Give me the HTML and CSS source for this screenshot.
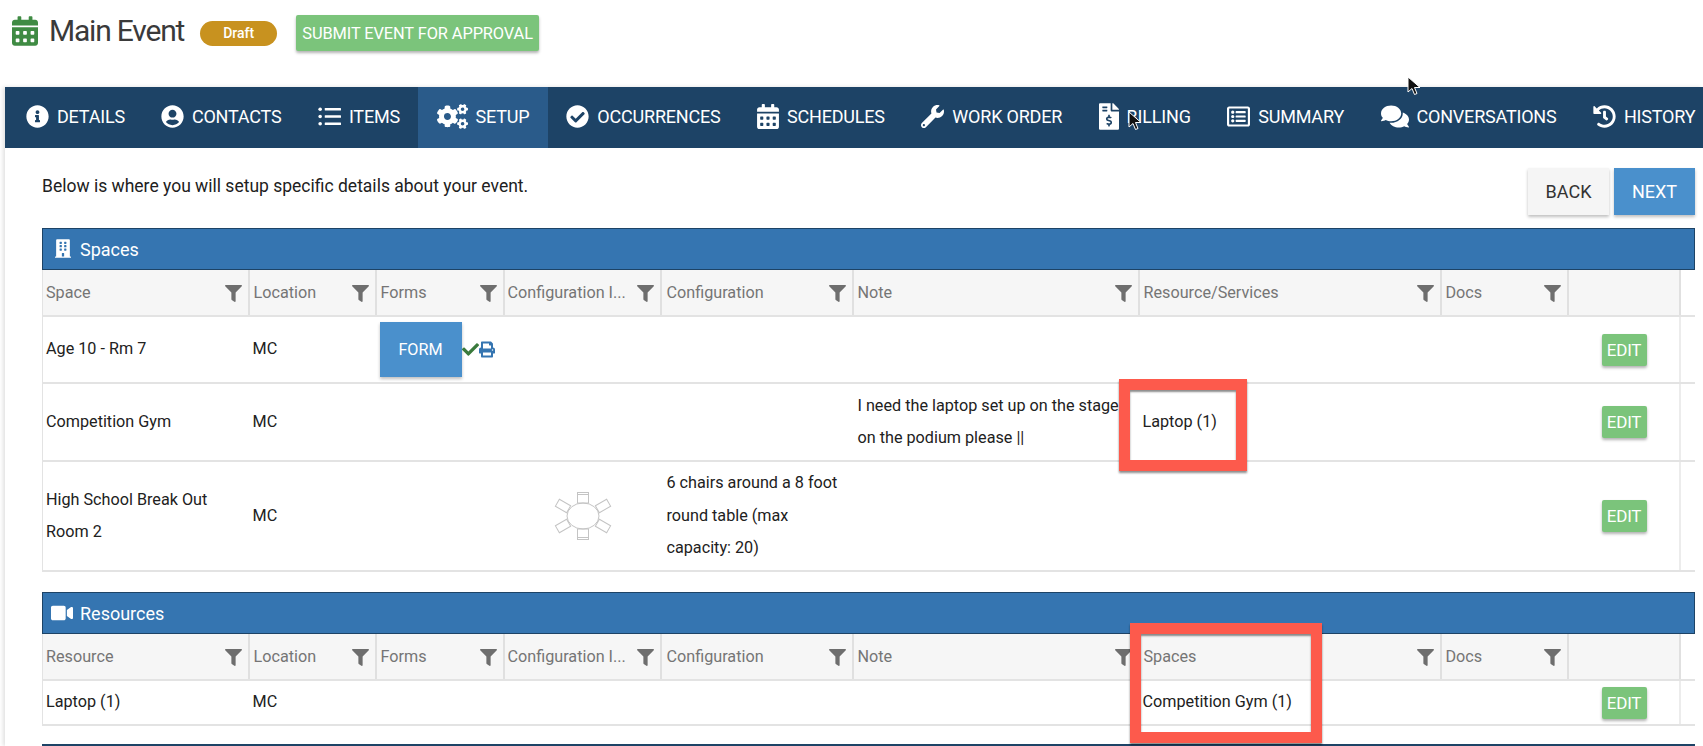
FILE: index.html
```html
<!DOCTYPE html>
<html lang="en">
<head>
<meta charset="utf-8">
<title>Main Event</title>
<link rel="stylesheet" href="styles.css">
</head>
<body>
<svg class="sprite" aria-hidden="true">
<symbol id="i-cal" viewBox="0 0 448 512"><path d="M0 464c0 26.500 21.500 48 48 48h352c26.500 0 48-21.500 48-48V192H0v272zm320-196c0-6.600 5.400-12 12-12h40c6.600 0 12 5.400 12 12v40c0 6.600-5.400 12-12 12h-40c-6.600 0-12-5.400-12-12v-40zm0 128c0-6.600 5.400-12 12-12h40c6.600 0 12 5.400 12 12v40c0 6.600-5.400 12-12 12h-40c-6.600 0-12-5.400-12-12v-40zM192 268c0-6.600 5.400-12 12-12h40c6.600 0 12 5.400 12 12v40c0 6.600-5.400 12-12 12h-40c-6.600 0-12-5.400-12-12v-40zm0 128c0-6.600 5.400-12 12-12h40c6.600 0 12 5.400 12 12v40c0 6.600-5.400 12-12 12h-40c-6.600 0-12-5.400-12-12v-40zM64 268c0-6.600 5.400-12 12-12h40c6.600 0 12 5.400 12 12v40c0 6.600-5.400 12-12 12H76c-6.600 0-12-5.400-12-12v-40zm0 128c0-6.600 5.400-12 12-12h40c6.600 0 12 5.400 12 12v40c0 6.600-5.400 12-12 12H76c-6.600 0-12-5.400-12-12v-40zM400 64h-48V16c0-8.800-7.200-16-16-16h-32c-8.800 0-16 7.200-16 16v48H160V16c0-8.800-7.200-16-16-16h-32c-8.800 0-16 7.200-16 16v48H48C21.500 64 0 85.500 0 112v48h448v-48c0-26.500-21.500-48-48-48z"/></symbol>
<symbol id="i-info" viewBox="0 0 512 512"><path d="M256 8C119.043 8 8 119.083 8 256c0 136.997 111.043 248 248 248s248-111.003 248-248C504 119.083 392.957 8 256 8zm0 110c23.196 0 42 18.804 42 42s-18.804 42-42 42-42-18.804-42-42 18.804-42 42-42zm56 254c0 6.627-5.373 12-12 12h-88c-6.627 0-12-5.373-12-12v-24c0-6.627 5.373-12 12-12h12v-64h-12c-6.627 0-12-5.373-12-12v-24c0-6.627 5.373-12 12-12h64c6.627 0 12 5.373 12 12v100h12c6.627 0 12 5.373 12 12v24z"/></symbol>
<symbol id="i-user" viewBox="0 0 496 512"><path d="M248 8C111 8 0 119 0 256s111 248 248 248 248-111 248-248S385 8 248 8zm0 96c48.600 0 88 39.400 88 88s-39.400 88-88 88-88-39.400-88-88 39.400-88 88-88zm0 344c-58.700 0-111.300-26.600-146.500-68.200 18.800-35.400 55.600-59.800 98.500-59.800 2.400 0 4.800.4 7.100 1.100 13 4.200 26.600 6.900 40.900 6.900 14.300 0 28-2.700 40.900-6.900 2.300-.7 4.700-1.100 7.100-1.100 42.900 0 79.700 24.400 98.500 59.800C359.300 421.400 306.700 448 248 448z"/></symbol>
<symbol id="i-list" viewBox="0 0 512 512"><circle cx="48" cy="96" r="40"/><circle cx="48" cy="256" r="40"/><circle cx="48" cy="416" r="40"/><rect x="150" y="68" width="362" height="56" rx="12"/><rect x="150" y="228" width="362" height="56" rx="12"/><rect x="150" y="388" width="362" height="56" rx="12"/></symbol>
<symbol id="i-cogs" viewBox="0 0 640 512"><path d="M512.100 191l-8.200 14.300c-3 5.300-9.400 7.500-15.100 5.400-11.800-4.400-22.600-10.700-32.100-18.600-4.600-3.800-5.800-10.500-2.800-15.700l8.200-14.300c-6.900-8-12.300-17.300-15.900-27.400h-16.500c-6 0-11.200-4.300-12.200-10.300-2-12-2.100-24.600 0-37.100 1-6 6.200-10.400 12.200-10.400h16.500c3.600-10.100 9-19.400 15.900-27.400l-8.200-14.300c-3-5.200-1.900-11.900 2.800-15.700 9.500-7.900 20.400-14.200 32.100-18.600 5.700-2.100 12.100.1 15.100 5.400l8.200 14.300c10.500-1.900 21.200-1.900 31.700 0L552 6.300c3-5.300 9.400-7.500 15.100-5.400 11.800 4.400 22.600 10.700 32.100 18.600 4.600 3.800 5.800 10.500 2.800 15.700l-8.200 14.300c6.900 8 12.300 17.300 15.900 27.400h16.500c6 0 11.200 4.300 12.200 10.300 2 12 2.100 24.600 0 37.100-1 6-6.200 10.400-12.200 10.400h-16.500c-3.600 10.100-9 19.400-15.900 27.400l8.200 14.300c3 5.200 1.900 11.900-2.800 15.700-9.500 7.900-20.400 14.200-32.100 18.600-5.700 2.100-12.100-.1-15.100-5.400l-8.200-14.300c-10.400 1.900-21.200 1.900-31.700 0zm-10.500-58.800c38.500 29.600 82.400-14.300 52.800-52.800-38.500-29.700-82.400 14.300-52.800 52.800zM386.300 286.100l33.700 16.800c10.100 5.800 14.500 18.100 10.500 29.100-8.900 24.200-26.400 46.400-42.600 65.800-7.400 8.900-20.200 11.100-30.300 5.300l-29.100-16.800c-16 13.700-34.600 24.600-54.900 31.700v33.600c0 11.600-8.300 21.600-19.700 23.600-24.600 4.200-50.400 4.400-75.900 0-11.500-2-20-11.900-20-23.600V418c-20.300-7.200-38.900-18-54.900-31.700L74 403c-10 5.800-22.900 3.600-30.300-5.300-16.200-19.400-33.300-41.600-42.200-65.700-4-10.900.4-23.200 10.500-29.100l33.300-16.800c-3.900-20.900-3.900-42.400 0-63.400L12 205.800c-10.100-5.800-14.600-18.100-10.500-29 8.900-24.200 26-46.400 42.200-65.800 7.400-8.900 20.200-11.100 30.300-5.300l29.100 16.800c16-13.700 34.600-24.600 54.900-31.700V57.100c0-11.500 8.200-21.500 19.600-23.500 24.600-4.200 50.500-4.400 76-.1 11.500 2 20 11.900 20 23.600v33.600c20.300 7.200 38.900 18 54.900 31.700l29.100-16.800c10-5.800 22.900-3.600 30.300 5.300 16.200 19.400 33.200 41.600 42.100 65.800 4 10.900.1 23.200-10 29.100l-33.700 16.800c3.900 21 3.900 42.500 0 63.500zm-117.600 21.100c59.200-77-28.700-164.900-105.700-105.700-59.200 77 28.700 164.900 105.700 105.700zm243.400 182.700l-8.200 14.300c-3 5.300-9.400 7.500-15.100 5.400-11.800-4.400-22.600-10.700-32.100-18.600-4.600-3.800-5.800-10.500-2.800-15.700l8.200-14.300c-6.900-8-12.300-17.300-15.900-27.400h-16.500c-6 0-11.200-4.300-12.200-10.300-2-12-2.100-24.600 0-37.100 1-6 6.200-10.400 12.200-10.400h16.500c3.600-10.100 9-19.400 15.900-27.400l-8.200-14.300c-3-5.200-1.900-11.900 2.800-15.700 9.500-7.900 20.400-14.200 32.100-18.600 5.700-2.100 12.100.1 15.100 5.400l8.200 14.300c10.500-1.900 21.200-1.900 31.700 0l8.200-14.300c3-5.300 9.400-7.500 15.100-5.400 11.800 4.400 22.600 10.700 32.100 18.600 4.600 3.800 5.800 10.500 2.800 15.700l-8.200 14.300c6.900 8 12.300 17.300 15.900 27.400h16.500c6 0 11.200 4.300 12.200 10.300 2 12 2.100 24.600 0 37.100-1 6-6.200 10.400-12.200 10.400h-16.500c-3.600 10.100-9 19.400-15.900 27.400l8.200 14.300c3 5.200 1.900 11.900-2.800 15.700-9.500 7.900-20.400 14.200-32.100 18.600-5.700 2.100-12.100-.1-15.100-5.400l-8.200-14.300c-10.400 1.900-21.200 1.900-31.700 0zM501.600 431c38.500 29.600 82.400-14.300 52.800-52.800-38.500-29.600-82.400 14.300-52.800 52.800z"/></symbol>
<symbol id="i-checkc" viewBox="0 0 512 512"><path d="M504 256c0 136.967-111.033 248-248 248S8 392.967 8 256 119.033 8 256 8s248 111.033 248 248zM227.314 387.314l184-184c6.248-6.248 6.248-16.379 0-22.627l-22.627-22.627c-6.248-6.249-16.379-6.249-22.628 0L216 308.118l-70.059-70.059c-6.248-6.248-16.379-6.248-22.628 0l-22.627 22.627c-6.248 6.248-6.248 16.379 0 22.627l104 104c6.249 6.249 16.379 6.249 22.628.001z"/></symbol>
<symbol id="i-wrench" viewBox="0 0 512 512"><path d="M507.730 109.100c-2.240-9.030-13.540-12.090-20.120-5.510l-74.360 74.360-67.880-11.310-11.310-67.880 74.360-74.360c6.620-6.620 3.430-17.900-5.660-20.160-47.380-11.740-99.550.91-136.580 37.930-39.640 39.640-50.550 97.100-34.050 147.200L18.740 402.760c-24.990 24.990-24.990 65.510 0 90.500 24.990 24.990 65.510 24.990 90.500 0l213.210-213.210c50.120 16.710 107.470 5.680 147.370-34.220 37.070-37.070 49.700-89.320 37.910-136.730zM64 472c-13.250 0-24-10.750-24-24 0-13.260 10.750-24 24-24s24 10.740 24 24c0 13.250-10.750 24-24 24z"/></symbol>
<symbol id="i-bill" viewBox="0 0 384 512"><path d="M377 105L279.100 7c-4.500-4.500-10.600-7-17-7H256v128h128v-6.100c0-6.300-2.500-12.400-7-16.900zm-153 31V0H24C10.700 0 0 10.700 0 24v464c0 13.300 10.700 24 24 24h336c13.300 0 24-10.700 24-24V160H248c-13.200 0-24-10.800-24-24zM64 72c0-4.420 3.580-8 8-8h80c4.420 0 8 3.580 8 8v16c0 4.420-3.580 8-8 8H72c-4.420 0-8-3.580-8-8V72zm0 80v-16c0-4.420 3.580-8 8-8h80c4.420 0 8 3.580 8 8v16c0 4.420-3.580 8-8 8H72c-4.420 0-8-3.580-8-8zm144 263.880V440c0 4.420-3.580 8-8 8h-16c-4.420 0-8-3.580-8-8v-24.290c-11.290-.58-22.270-4.520-31.370-11.350-3.900-2.930-4.100-8.770-.57-12.140l11.750-11.210c2.770-2.640 6.890-2.760 10.130-.73 3.870 2.420 8.260 3.720 12.820 3.720h28.110c6.500 0 11.800-5.920 11.800-13.190 0-5.950-3.610-11.190-8.770-12.730l-45-13.500c-18.590-5.580-31.580-23.420-31.580-43.390 0-24.520 19.050-44.440 42.670-45.070V232c0-4.420 3.580-8 8-8h16c4.420 0 8 3.580 8 8v24.290c11.290.58 22.270 4.510 31.370 11.350 3.900 2.930 4.100 8.770.57 12.140l-11.750 11.210c-2.770 2.640-6.890 2.760-10.130.73-3.870-2.430-8.260-3.720-12.820-3.720h-28.110c-6.500 0-11.800 5.920-11.800 13.190 0 5.950 3.610 11.190 8.770 12.730l45 13.500c18.590 5.580 31.580 23.420 31.580 43.390 0 24.530-19.050 44.440-42.670 45.070z"/></symbol>
<symbol id="i-sum" viewBox="0 0 512 512"><path d="M464 32H48C21.490 32 0 53.490 0 80v352c0 26.510 21.490 48 48 48h416c26.510 0 48-21.490 48-48V80c0-26.510-21.490-48-48-48zm-6 400H54a6 6 0 0 1-6-6V86a6 6 0 0 1 6-6h404a6 6 0 0 1 6 6v340a6 6 0 0 1-6 6zm-42-92v24c0 6.627-5.373 12-12 12H204c-6.627 0-12-5.373-12-12v-24c0-6.627 5.373-12 12-12h200c6.627 0 12 5.373 12 12zm0-96v24c0 6.627-5.373 12-12 12H204c-6.627 0-12-5.373-12-12v-24c0-6.627 5.373-12 12-12h200c6.627 0 12 5.373 12 12zm0-96v24c0 6.627-5.373 12-12 12H204c-6.627 0-12-5.373-12-12v-24c0-6.627 5.373-12 12-12h200c6.627 0 12 5.373 12 12zm-252 12c0 19.882-16.118 36-36 36s-36-16.118-36-36 16.118-36 36-36 36 16.118 36 36zm0 96c0 19.882-16.118 36-36 36s-36-16.118-36-36 16.118-36 36-36 36 16.118 36 36zm0 96c0 19.882-16.118 36-36 36s-36-16.118-36-36 16.118-36 36-36 36 16.118 36 36z"/></symbol>
<symbol id="i-chat" viewBox="0 0 576 512"><path d="M416 192c0-88.400-93.100-160-208-160S0 103.600 0 192c0 34.300 14.100 65.900 38 92-13.400 30.200-35.500 54.200-35.800 54.500-2.200 2.300-2.800 5.700-1.500 8.700S4.800 352 8 352c36.600 0 66.900-12.300 88.700-25 32.200 15.700 70.300 25 111.300 25 114.900 0 208-71.600 208-160zm122 220c23.900-26 38-57.700 38-92 0-66.900-53.500-124.200-129.300-148.100.9 6.600 1.300 13.300 1.300 20.100 0 105.900-107.700 192-240 192-10.800 0-21.300-.8-31.700-1.900C207.800 439.600 281.800 480 368 480c41 0 79.100-9.200 111.300-25 21.800 12.700 52.100 25 88.700 25 3.200 0 6.100-1.900 7.300-4.800 1.300-2.900.7-6.300-1.500-8.700-.3-.3-22.400-24.200-35.800-54.500z"/></symbol>
<symbol id="i-hist" viewBox="0 0 512 512"><path d="M504 255.531c.253 136.640-111.180 248.372-247.820 248.468-59.015.042-113.223-20.530-155.822-54.911-11.077-8.940-11.905-25.541-1.839-35.607l11.267-11.267c8.609-8.609 22.353-9.551 31.891-1.984C173.062 425.135 212.781 440 256 440c101.705 0 184-82.311 184-184 0-101.705-82.311-184-184-184-48.814 0-93.149 18.969-126.068 49.932l50.754 50.754c10.080 10.080 2.941 27.314-11.313 27.314H24c-8.837 0-16-7.163-16-16V38.627c0-14.254 17.234-21.393 27.314-11.314l49.372 49.372C129.209 34.136 189.552 8 256 8c136.810 0 247.747 110.780 248 247.531zm-180.912 78.784l9.823-12.630c8.138-10.463 6.253-25.542-4.210-33.679L288 256.349V152c0-13.255-10.745-24-24-24h-16c-13.255 0-24 10.745-24 24v135.651l65.409 50.874c10.463 8.137 25.541 6.253 33.679-4.210z"/></symbol>
<symbol id="i-filter" viewBox="0 0 512 512"><path d="M487.976 0H24.028C2.710 0-8.047 25.866 7.058 40.971L192 225.941V432c0 7.831 3.821 15.170 10.237 19.662l80 55.980C298.020 518.690 320 507.493 320 487.980V225.941l184.947-184.970C520.021 25.896 509.338 0 487.976 0z"/></symbol>
<symbol id="i-building" viewBox="0 0 448 512"><path d="M436 480h-20V24c0-13.255-10.745-24-24-24H56C42.745 0 32 10.745 32 24v456H12c-6.627 0-12 5.373-12 12v20h448v-20c0-6.627-5.373-12-12-12zM128 76c0-6.627 5.373-12 12-12h40c6.627 0 12 5.373 12 12v40c0 6.627-5.373 12-12 12h-40c-6.627 0-12-5.373-12-12V76zm0 96c0-6.627 5.373-12 12-12h40c6.627 0 12 5.373 12 12v40c0 6.627-5.373 12-12 12h-40c-6.627 0-12-5.373-12-12v-40zm52 148h-40c-6.627 0-12-5.373-12-12v-40c0-6.627 5.373-12 12-12h40c6.627 0 12 5.373 12 12v40c0 6.627-5.373 12-12 12zm76 160h-64v-84c0-6.627 5.373-12 12-12h40c6.627 0 12 5.373 12 12v84zm64-172c0 6.627-5.373 12-12 12h-40c-6.627 0-12-5.373-12-12v-40c0-6.627 5.373-12 12-12h40c6.627 0 12 5.373 12 12v40zm0-96c0 6.627-5.373 12-12 12h-40c-6.627 0-12-5.373-12-12v-40c0-6.627 5.373-12 12-12h40c6.627 0 12 5.373 12 12v40zm0-96c0 6.627-5.373 12-12 12h-40c-6.627 0-12-5.373-12-12V76c0-6.627 5.373-12 12-12h40c6.627 0 12 5.373 12 12v40z"/></symbol>
<symbol id="i-video" viewBox="0 0 576 512"><path d="M336.200 64H47.800C21.400 64 0 85.400 0 111.800v288.400C0 426.600 21.400 448 47.800 448h288.400c26.400 0 47.800-21.400 47.800-47.800V111.800c0-26.400-21.400-47.800-47.800-47.800zm189.400 37.700L416 177.300v157.400l109.600 75.500c21.200 14.600 50.400-.3 50.400-25.800V127.500c0-25.400-29.100-40.400-50.400-25.800z"/></symbol>
<symbol id="i-check" viewBox="0 0 512 512"><path d="M173.898 439.404l-166.400-166.400c-9.997-9.997-9.997-26.206 0-36.204l36.203-36.204c9.997-9.998 26.207-9.998 36.204 0L192 312.690 432.095 72.596c9.997-9.997 26.207-9.997 36.204 0l36.203 36.204c9.997 9.997 9.997 26.206 0 36.204l-294.400 294.401c-9.998 9.997-26.207 9.997-36.204-.001z"/></symbol>
<symbol id="i-print" viewBox="0 0 512 512"><path d="M448 192V77.250c0-8.490-3.370-16.620-9.370-22.630L393.370 9.370c-6-6-14.140-9.370-22.630-9.370H96C78.330 0 64 14.330 64 32v160c-35.350 0-64 28.650-64 64v112c0 8.840 7.160 16 16 16h48v96c0 17.670 14.330 32 32 32h320c17.670 0 32-14.330 32-32v-96h48c8.840 0 16-7.160 16-16V256c0-35.350-28.650-64-64-64zm-64 256H128v-96h256v96zm0-224H128V64h192v48c0 8.840 7.160 16 16 16h48v96zm48 72c-13.250 0-24-10.750-24-24 0-13.260 10.750-24 24-24s24 10.740 24 24c0 13.250-10.750 24-24 24z"/></symbol>
<symbol id="i-cursor" viewBox="0 0 14 20"><path d="M1 1v15l4-3.500 2.500 6 2.500-1-2.500-6H13z" fill="#111" stroke="#fff" stroke-width="1"/></symbol>
</svg>

<div class="page">
  <header class="title-bar">
    <svg class="title-icon"><use href="#i-cal"/></svg>
    <h1 class="title">Main Event</h1>
    <span class="badge">Draft</span>
    <button class="btn-submit">SUBMIT EVENT FOR APPROVAL</button>
  </header>

  <div class="shell">
    <nav class="tabs">
      <a class="tab tab-first"><svg class="ti"><use href="#i-info"/></svg>DETAILS</a>
      <a class="tab"><svg class="ti"><use href="#i-user"/></svg>CONTACTS</a>
      <a class="tab"><svg class="ti"><use href="#i-list"/></svg>ITEMS</a>
      <a class="tab active"><svg class="ti ti-wide"><use href="#i-cogs"/></svg>SETUP</a>
      <a class="tab"><svg class="ti"><use href="#i-checkc"/></svg>OCCURRENCES</a>
      <a class="tab"><svg class="ti ti-cal"><use href="#i-cal"/></svg>SCHEDULES</a>
      <a class="tab"><svg class="ti"><use href="#i-wrench"/></svg>WORK ORDER</a>
      <a class="tab"><svg class="ti ti-bill"><use href="#i-bill"/></svg>BILLING</a>
      <a class="tab"><svg class="ti"><use href="#i-sum"/></svg>SUMMARY</a>
      <a class="tab"><svg class="ti ti-chat"><use href="#i-chat"/></svg>CONVERSATIONS</a>
      <a class="tab"><svg class="ti"><use href="#i-hist"/></svg>HISTORY</a>
    </nav>

    <main class="content">
      <div class="intro">
        <p class="intro-text">Below is where you will setup specific details about your event.</p>
        <div class="intro-actions">
          <button class="btn btn-back">BACK</button>
          <button class="btn btn-next">NEXT</button>
        </div>
      </div>

      <section class="panel">
        <h2 class="panel-head"><svg class="pi pi-b"><use href="#i-building"/></svg>Spaces</h2>
        <table class="grid">
          <colgroup><col class="c1"><col class="c2"><col class="c3"><col class="c4"><col class="c5"><col class="c6"><col class="c7"><col class="c8"><col class="c9"><col></colgroup>
          <thead>
            <tr>
              <th><div class="th-in">Space<svg class="fi"><use href="#i-filter"/></svg></div></th>
              <th><div class="th-in">Location<svg class="fi"><use href="#i-filter"/></svg></div></th>
              <th><div class="th-in">Forms<svg class="fi"><use href="#i-filter"/></svg></div></th>
              <th><div class="th-in"><span class="clip">Configuration I...</span><svg class="fi"><use href="#i-filter"/></svg></div></th>
              <th><div class="th-in">Configuration<svg class="fi"><use href="#i-filter"/></svg></div></th>
              <th><div class="th-in">Note<svg class="fi"><use href="#i-filter"/></svg></div></th>
              <th><div class="th-in">Resource/Services<svg class="fi"><use href="#i-filter"/></svg></div></th>
              <th><div class="th-in">Docs<svg class="fi"><use href="#i-filter"/></svg></div></th>
              <th></th>
              <th class="gutter"></th>
            </tr>
          </thead>
          <tbody>
            <tr class="r1">
              <td>Age 10 - Rm 7</td>
              <td>MC</td>
              <td><div class="form-cell"><button class="btn-form">FORM</button><svg class="ok"><use href="#i-check"/></svg><svg class="pr"><use href="#i-print"/></svg></div></td>
              <td></td><td></td><td></td><td></td><td></td>
              <td class="act"><button class="btn-edit">EDIT</button></td>
              <td class="gutter"></td>
            </tr>
            <tr class="r2">
              <td>Competition Gym</td>
              <td>MC</td>
              <td></td><td></td><td></td>
              <td class="note">I need the laptop set up on the stage on the podium please ||</td>
              <td>Laptop (1)</td>
              <td></td>
              <td class="act"><button class="btn-edit">EDIT</button></td>
              <td class="gutter"></td>
            </tr>
            <tr class="r3">
              <td>High School Break Out Room 2</td>
              <td>MC</td>
              <td></td>
              <td class="img-cell">
                <svg class="seating" viewBox="0 0 60 52" stroke="#c4c4c4" stroke-width="1">
                  <ellipse cx="30" cy="26" rx="16" ry="13"/>
                  <rect x="24.500" y="2.500" width="11" height="10.500"/>
                  <line x1="24.500" y1="4.500" x2="35.500" y2="4.500"/>
                  <rect x="24.500" y="39" width="11" height="10.500"/>
                  <line x1="24.500" y1="47.500" x2="35.500" y2="47.500"/>
                  <rect x="3.500" y="12" width="13" height="8" transform="rotate(30 10 16)"/>
                  <rect x="43.500" y="12" width="13" height="8" transform="rotate(-30 50 16)"/>
                  <rect x="3.500" y="32" width="13" height="8" transform="rotate(-30 10 36)"/>
                  <rect x="43.500" y="32" width="13" height="8" transform="rotate(30 50 36)"/>
                </svg>
              </td>
              <td>6 chairs around a 8 foot round table (max capacity: 20)</td>
              <td></td><td></td><td></td>
              <td class="act"><button class="btn-edit">EDIT</button></td>
              <td class="gutter"></td>
            </tr>
          </tbody>
        </table>
      </section>

      <section class="panel">
        <h2 class="panel-head"><svg class="pi pi-v"><use href="#i-video"/></svg>Resources</h2>
        <table class="grid">
          <colgroup><col class="c1"><col class="c2"><col class="c3"><col class="c4"><col class="c5"><col class="c6"><col class="c7"><col class="c8"><col class="c9"><col></colgroup>
          <thead>
            <tr>
              <th><div class="th-in">Resource<svg class="fi"><use href="#i-filter"/></svg></div></th>
              <th><div class="th-in">Location<svg class="fi"><use href="#i-filter"/></svg></div></th>
              <th><div class="th-in">Forms<svg class="fi"><use href="#i-filter"/></svg></div></th>
              <th><div class="th-in"><span class="clip">Configuration I...</span><svg class="fi"><use href="#i-filter"/></svg></div></th>
              <th><div class="th-in">Configuration<svg class="fi"><use href="#i-filter"/></svg></div></th>
              <th><div class="th-in">Note<svg class="fi"><use href="#i-filter"/></svg></div></th>
              <th><div class="th-in">Spaces<svg class="fi"><use href="#i-filter"/></svg></div></th>
              <th><div class="th-in">Docs<svg class="fi"><use href="#i-filter"/></svg></div></th>
              <th></th>
              <th class="gutter"></th>
            </tr>
          </thead>
          <tbody>
            <tr class="r4">
              <td>Laptop (1)</td>
              <td>MC</td>
              <td></td><td></td><td></td><td></td>
              <td>Competition Gym (1)</td>
              <td></td>
              <td class="act"><button class="btn-edit">EDIT</button></td>
              <td class="gutter"></td>
            </tr>
          </tbody>
        </table>
      </section>

      <div class="panel-next"></div>
    </main>
  </div>

  <div class="mark mark-a"></div>
  <div class="mark mark-b"></div>
  <svg class="cursor cursor-a"><use href="#i-cursor"/></svg>
  <svg class="cursor cursor-b"><use href="#i-cursor"/></svg>
</div>
</body>
</html>
```

FILE: styles.css
```css
* { box-sizing: border-box; }
html, body { margin: 0; padding: 0; background: #fff; }
body { font-family: Roboto, "Liberation Sans", sans-serif; color: #212121; }
.sprite { position: absolute; width: 0; height: 0; overflow: hidden; }
svg { fill: currentColor; flex: none; }
button { font-family: inherit; border: 0; cursor: pointer; }

.page { position: relative; width: 1703px; height: 746px; overflow: hidden; }

.title-bar { display: flex; align-items: center; height: 87px; padding: 0 0 25px 12px; }
.title-icon { width: 26px; height: 30px; color: #3f8b43; margin-right: 11px; }
.title { margin: 0 16px 0 0; font-size: 30px; font-weight: 400; letter-spacing: -1.2px; color: #3a3a3a; line-height: 36px; }
.badge { width: 77px; height: 25px; margin-top: 4px; margin-right: 19px; line-height: 25px; text-align: center; background: #c8921f; color: #fff; border-radius: 13px; font-size: 14px; font-weight: 500; }
.btn-submit { width: 243px; height: 36px; margin-top: 4px; padding: 0; background: #7bc47b; color: #fff; font-size: 16.400px; font-weight: 400; letter-spacing: -0.1px; white-space: nowrap; border-radius: 2px; box-shadow: 0 2px 3px rgba(0,0,0,.3); }

.shell { margin-left: 5px; box-shadow: -2px 0 4px rgba(0,0,0,.12); height: 659px; }
.tabs { display: flex; height: 61px; background: #1d4366; white-space: nowrap; }
.tab { display: flex; align-items: center; gap: 8px; padding: 0 18.500px 3px 18px; color: #fff; font-size: 18px; font-weight: 400; letter-spacing: -0.2px; }
.tab-first { padding-left: 21px; padding-right: 18px; }
.tab.active { background: #2a5b8a; gap: 7px; padding-left: 19px; padding-right: 19px; }
.ti { width: 23px; height: 23px; }
.ti-wide { width: 31px; height: 25px; }
.ti-cal { width: 22px; height: 25px; }
.ti-bill { width: 20px; height: 27px; }
.ti-chat { width: 28px; height: 25px; }

.content { padding: 0 8px 0 37px; }
.intro { display: flex; justify-content: space-between; height: 80px; padding-top: 20px; }
.intro-text { margin: 8px 0 0; font-size: 17.500px; line-height: 20px; color: #212121; }
.intro-actions { display: flex; gap: 5px; }
.btn { width: 81px; height: 47px; font-size: 18px; box-shadow: 0 2px 3px rgba(0,0,0,.25); }
.btn-back { background: #f5f5f5; color: #333; }
.btn-next { background: #4a90cc; color: #fff; }

.panel { margin-bottom: 20px; }
.panel-head { display: flex; align-items: center; height: 42px; margin: 0; padding: 1px 0 0 8px; background: #3575b1; border: 1px solid #1d4366; color: #fff; font-size: 18px; font-weight: 400; }
.pi-b { width: 16px; height: 21px; margin-left: 4px; margin-right: 9px; margin-top: -2px; }
.pi-v { width: 22px; height: 20px; margin-right: 7px; margin-top: -2px; }

.grid { width: 1653px; table-layout: fixed; border-collapse: collapse; font-size: 16.200px; line-height: 32.500px; }
.c1 { width: 206px; } .c2 { width: 127px; } .c3 { width: 128px; } .c4 { width: 157px; } .c5 { width: 192px; } .c6 { width: 286px; } .c7 { width: 302px; } .c8 { width: 127px; } .c9 { width: 112px; }
.grid th { height: 46px; padding: 0; background: #f6f6f6; border-right: 2px solid #e0e0e0; border-bottom: 2px solid #e3e3e3; font-weight: 400; color: #757575; text-align: left; }
.th-in { display: flex; align-items: center; justify-content: space-between; padding: 1px 6px 0 3px; white-space: nowrap; }
.grid th:nth-child(n+2) .th-in { padding-left: 4px; }
.grid th:nth-child(4) .th-in { padding-left: 3px; }
.grid th:nth-child(5) .th-in { padding-left: 5px; }
.clip { overflow: hidden; }
.fi { width: 17px; height: 17px; color: #6e6e6e; }
.grid td { padding: 0 5px; border-bottom: 2px solid #e3e3e3; vertical-align: middle; }
.grid td:first-child { padding-left: 3px; border-left: 1px solid #e3e3e3; }
.grid td:nth-child(2), .grid td:nth-child(7) { padding-left: 4px; }
.grid td:nth-child(5) { padding-left: 6px; }
.grid th:first-child { border-left: 1px solid #e3e3e3; }
.grid th.gutter { background: #fff; border-right: 0; }
.grid td.gutter { border-left: 2px solid #ececec; padding: 0; }
.r1 td { height: 67px; }
.r2 td { height: 78px; }
.r3 td { height: 110px; }
.r4 td { height: 45px; }
.form-cell { display: flex; align-items: center; }
.btn-form { width: 82px; height: 55px; margin-left: -1px; background: #4a90cc; color: #fff; font-size: 16.200px; box-shadow: 0 2px 3px rgba(0,0,0,.25); }
.ok { width: 17px; height: 17px; color: #3a7a3c; }
.pr { width: 16px; height: 17px; color: #3575b1; }
.img-cell { text-align: center; }
.seating { display: block; width: 60px; height: 52px; margin: 0 auto; fill: none; transform: translateX(1px); }
.act { text-align: center; }
.btn-edit { width: 45px; height: 32px; margin-left: 2px; padding: 0; background: #7bc47b; color: #fff; font-size: 17px; letter-spacing: -0.2px; border-radius: 2px; box-shadow: 0 2px 3px rgba(0,0,0,.3); vertical-align: middle; }

.panel-next { height: 4px; background: #1d4366; margin-top: -2px; }

.mark { position: absolute; border: 11px solid #fd5a4c; box-shadow: 0 2px 2px rgba(0,0,0,.45), inset 0 2px 2px rgba(0,0,0,.45); }
.mark-a { left: 1119px; top: 379px; width: 128px; height: 92px; }
.mark-b { left: 1130px; top: 623px; width: 192px; height: 120px; }
.cursor { position: absolute; width: 14px; height: 20px; }
.cursor-a { left: 1407px; top: 76px; }
.cursor-b { left: 1128px; top: 111px; }
```
